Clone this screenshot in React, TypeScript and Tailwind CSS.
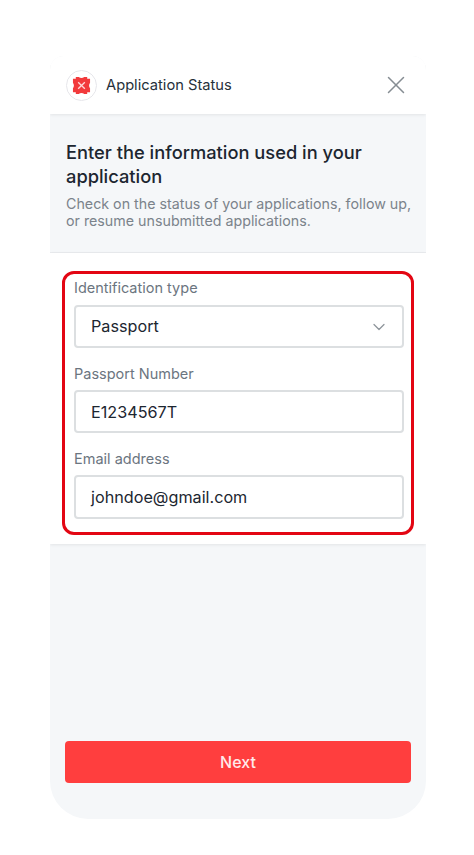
import { ChevronDown, X } from "lucide-react";

const label = "block text-[14.5px] leading-[20px] text-[#6b7580]";
const field = "flex h-[43px] items-center rounded-[4px] border-2 border-[#dcdfe1] bg-white pl-[15px] text-[16.2px] text-[#1c2630]";

function Logo() {
  return (
    <svg viewBox="0 0 20 20" className="h-[19px] w-[19px]">
      <path
        d="M1 3 L4 3 L4 1 L7 1 Q10 3 13 1 L16 1 L16 3 L19 3 L19 7 Q17 10 19 13 L19 17 L16 17 L16 19 L13 19 Q10 17 7 19 L4 19 L4 17 L1 17 L1 13 Q3 10 1 7 Z"
        fill="#f23a3c"
      />
      <path d="M6.5 6.5 L13.5 13.5 M13.5 6.5 L6.5 13.5" stroke="#ffd9d9" strokeWidth="1.4" />
    </svg>
  );
}

export default function App() {
  return (
    <div className="h-[855px] w-[474px] bg-white pt-[56px] pl-[50px] font-['Inter',sans-serif]">
      <div className="flex h-[763px] w-[376px] flex-col overflow-hidden rounded-b-[38px] rounded-t-[14px] bg-[#f5f7f9]">
        {/* Header */}
        <div className="flex h-[58px] items-center justify-between bg-white pl-[16px] pr-[15px] shadow-[0_1px_3px_rgba(0,0,0,0.08)]">
          <div className="flex items-center gap-[9px]">
            <div className="flex h-[31px] w-[31px] items-center justify-center rounded-full border border-[#e6e6ea] bg-white">
              <Logo />
            </div>
            <span className="text-[14.7px] text-[#26303a]">Application Status</span>
          </div>
          <X className="h-[30px] w-[30px] text-[#868d93]" strokeWidth={1.2} />
        </div>

        {/* Intro */}
        <div className="h-[139px] border-b border-[#e9ebee] pl-[16px] pr-[14px] pt-[26px]">
          <h1 className="text-[18.3px] font-medium leading-[24px] text-[#1c2630]">
            Enter the information used in your application
          </h1>
          <p className="mt-[7px] text-[14.25px] leading-[17px] text-[#7b838b]">
            Check on the status of your applications, follow up, or resume unsubmitted applications.
          </p>
        </div>

        {/* Form */}
        <div className="relative h-[291px] bg-white pl-[24px] pr-[22px] pt-[25px] shadow-[0_1px_3px_rgba(0,0,0,0.08)]">
          <label className={label}>Identification type</label>
          <div className={`${field} mt-[7px] justify-between pr-[13px]`}>
            <span>Passport</span>
            <ChevronDown className="h-[20px] w-[20px] text-[#8e959b]" strokeWidth={1.5} />
          </div>
          <label className={`${label} mt-[16px]`}>Passport Number</label>
          <div className={`${field} mt-[6px] pt-[1px]`}>E1234567T</div>
          <label className={`${label} mt-[16px]`}>Email address</label>
          <div className={`${field} mt-[6px] h-[44px] pt-[1px]`}>johndoe@gmail.com</div>
          <div className="pointer-events-none absolute left-[12px] top-[18px] h-[264px] w-[352px] rounded-[12px] border-[3px] border-[#e30613]" />
        </div>

        {/* Footer */}
        <div className="flex flex-1 flex-col justify-end px-[15px] pb-[36px]">
          <button className="h-[42px] w-full rounded-[4px] bg-[#ff3e3e] text-[16px] font-medium text-[#ffeaea]">
            Next
          </button>
        </div>
      </div>
    </div>
  );
}
